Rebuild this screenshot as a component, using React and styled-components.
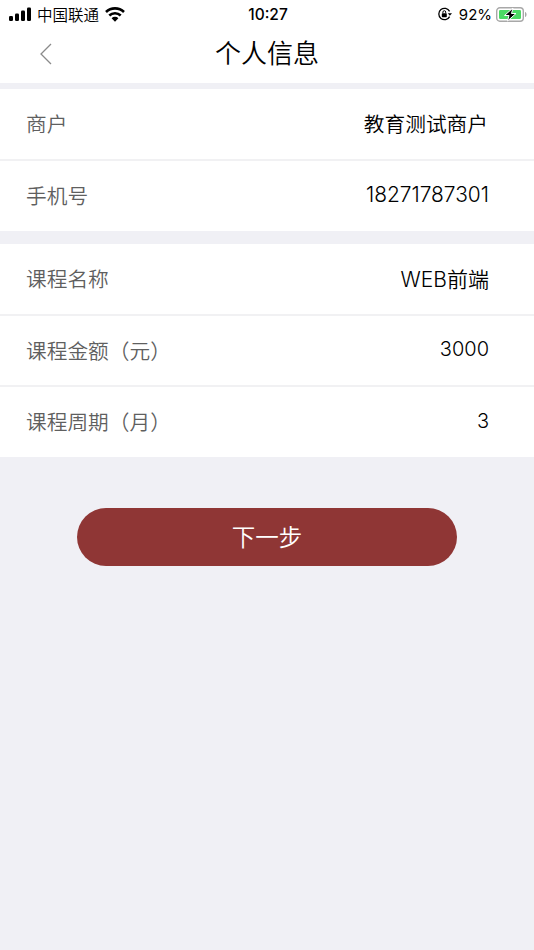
import React from 'react';
import styled, { createGlobalStyle } from 'styled-components';

const GlobalStyle = createGlobalStyle`
  html, body {
    margin: 0;
    padding: 0;
    background: #f0f0f5;
  }
  * {
    box-sizing: border-box;
  }
`;

const FONT = `"Noto Sans CJK SC", sans-serif`;
const LATIN = `Inter, "Noto Sans CJK SC", sans-serif`;

const Page = styled.div`
  width: 534px;
  height: 950px;
  overflow: hidden;
  background: #f0f0f5;
  font-family: ${FONT};
  font-weight: 350;
`;

const Header = styled.header`
  background: #fff;
  height: 83px;
`;

const StatusBar = styled.div`
  height: 28px;
  padding: 0 7px 0 9px;
  display: flex;
  align-items: center;
  color: #000;
`;

const StatusSide = styled.div`
  flex: 1;
  display: flex;
  align-items: center;
  justify-content: ${({ end }) => (end ? 'flex-end' : 'flex-start')};
`;

const Carrier = styled.span`
  font-size: 15.5px;
  margin: 0 6px 0 5px;
`;

const Clock = styled.span`
  font-family: ${LATIN};
  font-size: 15.5px;
  font-weight: 500;
`;

const Percent = styled.span`
  font-family: ${LATIN};
  font-size: 15px;
  font-weight: 400;
  margin: 0 4px 0 7px;
`;

const NavBar = styled.div`
  position: relative;
  height: 55px;
  display: flex;
  align-items: center;
  justify-content: center;
`;

const BackButton = styled.div`
  position: absolute;
  left: 39px;
  top: 14px;
  line-height: 0;
`;

const Title = styled.h1`
  margin: 0 0 8px;
  font-size: 26px;
  font-weight: 350;
  color: #000;
`;

const Section = styled.section`
  background: #fff;
  margin-top: ${({ gap }) => gap}px;
`;

const Row = styled.div`
  height: ${({ h }) => h}px;
  padding: 0 45px 2px 26px;
  display: flex;
  align-items: center;
  justify-content: space-between;
  border-top: ${({ first }) => (first ? 'none' : '2px solid #f1f1f3')};
`;

const Label = styled.span`
  font-size: 20.7px;
  color: #5f5f5f;
`;

const Value = styled.span`
  font-family: ${LATIN};
  font-size: ${({ size }) => size}px;
  font-weight: 350;
  color: #000;
  margin-top: -1px;
  padding-right: ${({ pr }) => pr || 0}px;
`;

const Footer = styled.div`
  display: flex;
  justify-content: center;
  margin-top: 51px;
`;

const NextButton = styled.button`
  width: 380px;
  height: 58px;
  border: none;
  border-radius: 29px;
  background: #8f3635;
  color: #fff;
  font-family: ${FONT};
  font-weight: 350;
  font-size: 23.5px;
  padding: 0 0 3px;
`;

const SignalIcon = () => (
  <svg width="23" height="14" viewBox="0 0 23 14">
    <rect x="0" y="9" width="4" height="5" rx="1.2" fill="#000" />
    <rect x="6" y="6.5" width="4" height="7.5" rx="1.2" fill="#000" />
    <rect x="12" y="3.5" width="4" height="10.5" rx="1.2" fill="#000" />
    <rect x="18" y="0.5" width="4" height="13.5" rx="1.2" fill="#000" />
  </svg>
);

const WifiIcon = () => (
  <svg width="20" height="15" viewBox="0 0 20 15">
    <path d="M1 5a13 13 0 0 1 18 0" fill="none" stroke="#000" strokeWidth="2.6" />
    <path d="M4.3 8.5a8.2 8.2 0 0 1 11.4 0" fill="none" stroke="#000" strokeWidth="2.6" />
    <path d="M10 14.8l-3.4-3.6a4.8 4.8 0 0 1 6.8 0z" fill="#000" />
  </svg>
);

const RotationLockIcon = () => (
  <svg width="14" height="14" viewBox="0 0 14 14">
    <path d="M11.6 9.6A5.7 5.7 0 1 1 11.6 4.4" fill="none" stroke="#000" strokeWidth="1.3" />
    <path d="M9.8 6.2h4.2l-2.1 2.6z" fill="#000" />
    <rect x="3.8" y="6.2" width="5" height="4" rx="0.7" fill="#000" />
    <path d="M4.9 6.2V5.1a1.4 1.4 0 0 1 2.8 0v1.1" fill="none" stroke="#000" strokeWidth="1" />
  </svg>
);

const BatteryIcon = () => (
  <svg width="31" height="15" viewBox="0 0 31 15">
    <rect x="0.7" y="0.7" width="26.6" height="13.6" rx="3.2" fill="none" stroke="#a8a8a8" strokeWidth="1.4" />
    <rect x="3" y="3" width="22" height="9" rx="1.2" fill="#4cd964" />
    <path d="M29 5v5c1-.3 1.6-1.3 1.6-2.5S30 5.3 29 5z" fill="#a8a8a8" />
    <path d="M17 1L8.5 8.500h4.500l-1.500 5.500 8.500-7.500H15.500z" fill="#000" stroke="#fff" strokeWidth="1" />
  </svg>
);

const BackIcon = () => (
  <svg width="14" height="24" viewBox="0 0 14 24">
    <path d="M12 2L2 12l10 10" fill="none" stroke="#8a8a8a" strokeWidth="1.3" />
  </svg>
);

const merchantRows = [
  { label: '商户', value: '教育测试商户', pr: 1, size: 20.7, h: 70 },
  { label: '手机号', value: '18271787301', pr: 0, size: 20.9, h: 72 },
];

const courseRows = [
  { label: '课程名称', value: 'WEB前端', size: 21, h: 70 },
  { label: '课程金额（元）', value: '3000', size: 20, h: 71 },
  { label: '课程周期（月）', value: '3', size: 20, h: 72 },
];

const App = () => {
  return (
    <Page>
      <GlobalStyle />
      <Header>
        <StatusBar>
          <StatusSide>
            <SignalIcon />
            <Carrier>中国联通</Carrier>
            <WifiIcon />
          </StatusSide>
          <Clock>10:27</Clock>
          <StatusSide end>
            <RotationLockIcon />
            <Percent>92%</Percent>
            <BatteryIcon />
          </StatusSide>
        </StatusBar>
        <NavBar>
          <BackButton>
            <BackIcon />
          </BackButton>
          <Title>个人信息</Title>
        </NavBar>
      </Header>
      <Section gap={6}>
        {merchantRows.map((row, index) => (
          <Row key={row.label} h={row.h} first={index === 0}>
            <Label>{row.label}</Label>
            <Value pr={row.pr} size={row.size}>{row.value}</Value>
          </Row>
        ))}
      </Section>
      <Section gap={13}>
        {courseRows.map((row, index) => (
          <Row key={row.label} h={row.h} first={index === 0}>
            <Label>{row.label}</Label>
            <Value size={row.size}>{row.value}</Value>
          </Row>
        ))}
      </Section>
      <Footer>
        <NextButton>下一步</NextButton>
      </Footer>
    </Page>
  );
};

export default App;
